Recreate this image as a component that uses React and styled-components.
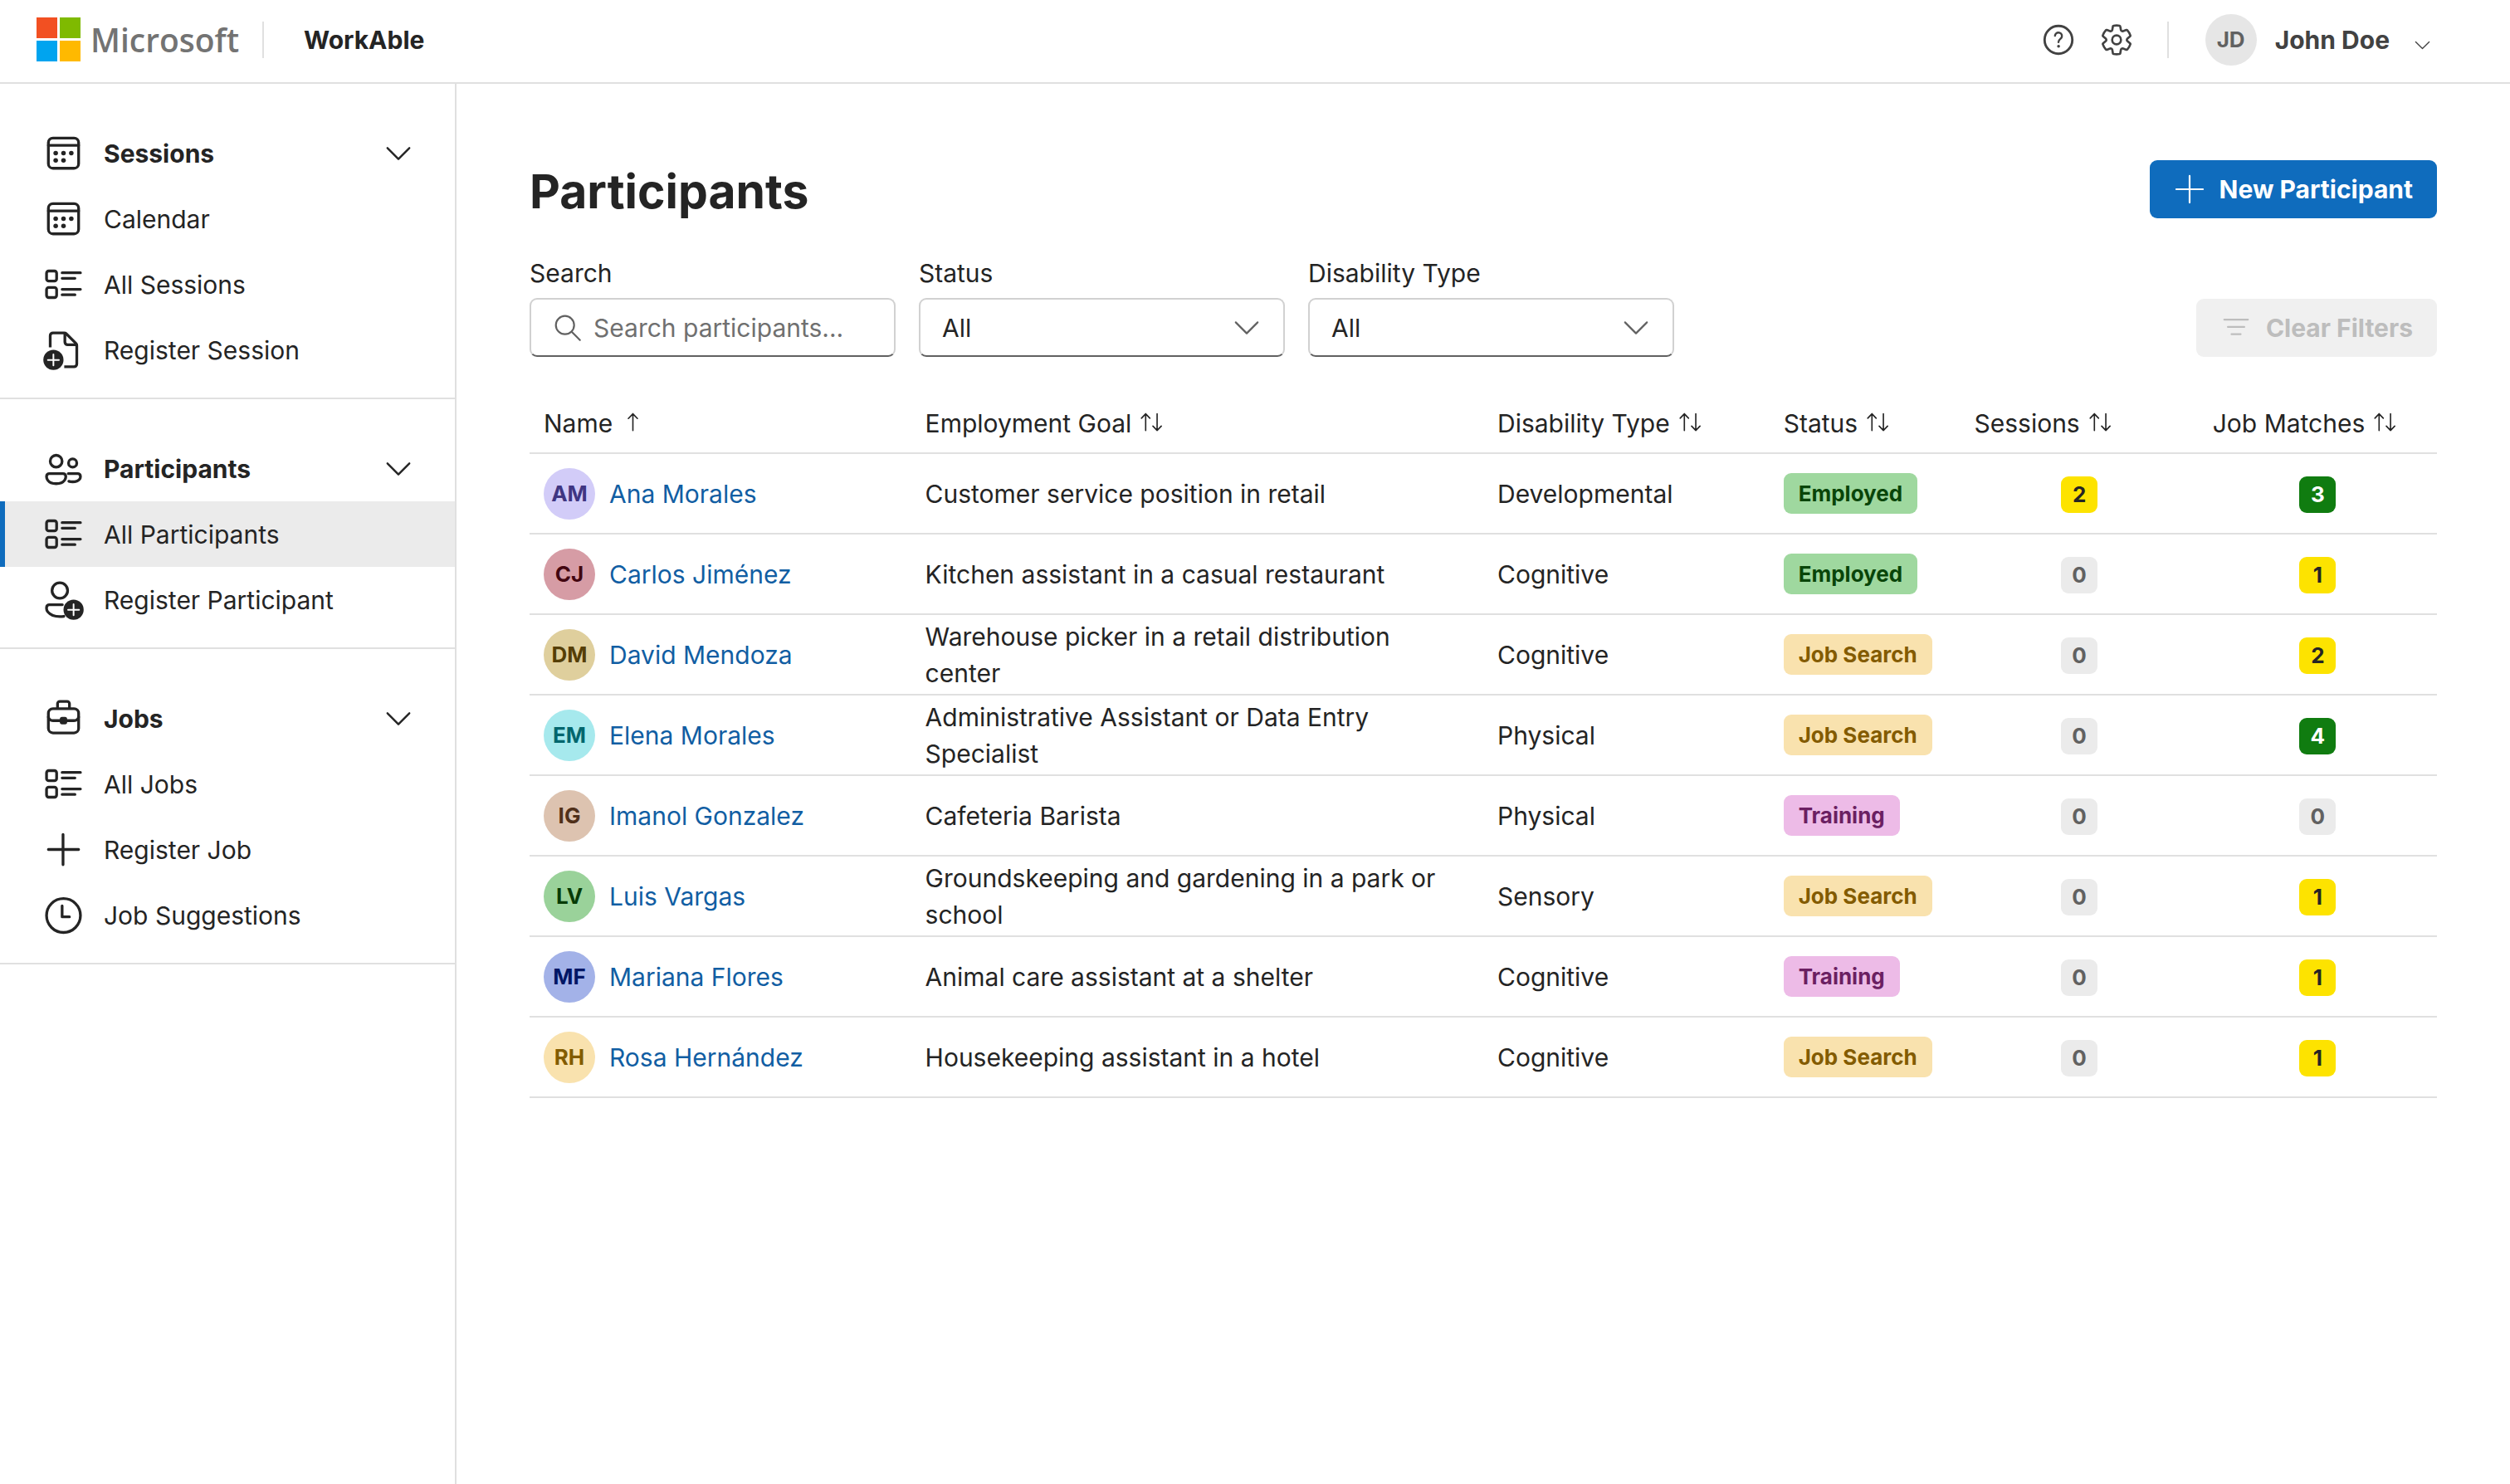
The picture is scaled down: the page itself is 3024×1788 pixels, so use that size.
import React from "react";
import styled, { createGlobalStyle } from "styled-components";

const GlobalStyle = createGlobalStyle`
  *, *::before, *::after { box-sizing: border-box; }
  body {
    margin: 0;
    background: #ffffff;
    color: #242424;
    font-family: Inter, "Liberation Sans", sans-serif;
    font-size: 30px;
    line-height: 44px;
  }
  button, input, select { font: inherit; color: inherit; margin: 0; }
`;

/* ---------- Icons ---------- */

const Svg = styled.svg`
  display: block;
  flex: none;
  width: ${(p) => p.$size}px;
  height: ${(p) => p.$size}px;
  fill: none;
  stroke: currentColor;
  stroke-width: ${(p) => p.$stroke || 1.5};
  stroke-linecap: round;
  stroke-linejoin: round;
`;

const Icon24 = ({ children }) => (
  <Svg $size={53} viewBox="0 0 24 24" aria-hidden="true">{children}</Svg>
);

const PlusDisc = ({ cx }) => (
  <>
    <circle cx={cx} cy="17.5" r="5.5" fill="currentColor" stroke="none" />
    <path d={`M${cx} 14.5v6M${cx - 3} 17.5h6`} stroke="#fff" strokeWidth="0.9" />
  </>
);

const CalendarIcon = () => (
  <Icon24>
    <rect x="3.75" y="3.75" width="16.5" height="16.5" rx="2.5" />
    <path d="M3.75 7.75h16.5" />
    <g fill="currentColor" stroke="none">
      <circle cx="7.75" cy="12" r="1.25" />
      <circle cx="12" cy="12" r="1.25" />
      <circle cx="16.25" cy="12" r="1.25" />
      <circle cx="7.75" cy="16" r="1.25" />
      <circle cx="12" cy="16" r="1.25" />
    </g>
  </Icon24>
);

const ListIcon = () => (
  <Icon24>
    <rect x="2.75" y="4.75" width="5.5" height="5.5" rx="1.2" />
    <rect x="2.75" y="13.75" width="5.5" height="5.5" rx="1.2" />
    <path d="M11.25 5.75h10M11.25 8.75h7M11.25 14.75h10M11.25 17.75h7" />
  </Icon24>
);

const DocumentAddIcon = () => (
  <Icon24>
    <path d="M4.75 10.6V4.25a1.5 1.5 0 0 1 1.5-1.5h6.2c.4 0 .8.2 1 .4l5.4 5.4c.3.3.4.7.4 1.1v10.1a1.5 1.5 0 0 1-1.5 1.5H12.4" strokeLinecap="butt" />
    <path d="M12.75 3v4.75a1.5 1.5 0 0 0 1.5 1.5H19" />
    <PlusDisc cx={6.5} />
  </Icon24>
);

const PeopleIcon = () => (
  <Icon24>
    <circle cx="8" cy="8" r="3.25" />
    <circle cx="17" cy="9" r="2.25" />
    <path d="M4.25 14.75h7.5c.83 0 1.5.67 1.5 1.5v.25s0 3.75-5.25 3.75-5.25-3.75-5.25-3.75v-.25c0-.83.67-1.5 1.5-1.5Z" />
    <path d="M14.6 14.75h5.15c.83 0 1.5.67 1.5 1.5v.25s0 2.75-4.25 2.75c-.8 0-1.5-.1-2.1-.3" />
  </Icon24>
);

const PersonAddIcon = () => (
  <Icon24>
    <circle cx="10" cy="7" r="4.25" />
    <path d="M11.4 14.75H4.25c-.83 0-1.5.67-1.5 1.5v.6c0 .7.25 1.3.7 1.85 1.4 1.7 3.6 2.55 6.55 2.55.8 0 1.5-.06 2.2-.18" />
    <PlusDisc cx={17.5} />
  </Icon24>
);

const BriefcaseIcon = () => (
  <Icon24>
    <path d="M8.75 6.5V4c0-.7.55-1.25 1.25-1.25h4c.7 0 1.25.55 1.25 1.25v2.5" />
    <rect x="3.75" y="6.75" width="16.5" height="13.2" rx="2.5" />
    <path d="M3.75 11.25c.3 1.2 1.3 2 2.5 2h11.5c1.2 0 2.2-.8 2.5-2" />
    <rect x="10" y="11.25" width="4" height="4" rx="1.2" fill="currentColor" stroke="none" />
  </Icon24>
);

const PlusIcon = () => (
  <Icon24>
    <path d="M11.75 3.75v16.5M3.75 12h16.5" />
  </Icon24>
);

const ClockIcon = () => (
  <Icon24>
    <circle cx="12" cy="12.25" r="9.25" />
    <path d="M11.25 7v6h4" />
  </Icon24>
);

const ChevronIcon = ({ size = 44, stroke = 1.1 }) => (
  <Svg $size={size} $stroke={stroke} viewBox="0 0 20 20" aria-hidden="true">
    <path d="M4 7l6 6 6-6" />
  </Svg>
);

const HelpIcon = () => (
  <Svg $size={44} $stroke={1.1} viewBox="0 0 20 20" aria-hidden="true">
    <circle cx="10" cy="10" r="7.6" strokeWidth="1.3" />
    <path d="M8.1 7.8c.1-1 .9-1.8 1.9-1.8s1.9.8 1.9 1.9c0 .8-.5 1.2-.9 1.6-.5.4-1 .9-1 1.8" strokeWidth="1.1" />
    <circle cx="10.05" cy="13.5" r=".8" fill="currentColor" stroke="none" />
  </Svg>
);

const GearIcon = () => (
  <Svg $size={44} $stroke={1.3} viewBox="0 0 20 20" aria-hidden="true">
    <g transform="translate(.7 .7) scale(.93)">
      <path d="M1.91 7.38A8.5 8.5 0 0 1 3.7 4.3a.5.5 0 0 1 .54-.13l1.92.68a1 1 0 0 0 1.32-.76l.36-2a.5.5 0 0 1 .4-.4 8.53 8.53 0 0 1 3.55 0c.2.04.35.2.38.4l.37 2a1 1 0 0 0 1.32.76l1.92-.68a.5.5 0 0 1 .54.13 8.5 8.5 0 0 1 1.78 3.08c.06.2 0 .4-.15.54l-1.56 1.32a1 1 0 0 0 0 1.52l1.56 1.32a.5.5 0 0 1 .15.54 8.5 8.5 0 0 1-1.78 3.08.5.5 0 0 1-.54.13l-1.92-.68a1 1 0 0 0-1.32.76l-.37 2a.5.5 0 0 1-.38.4 8.53 8.53 0 0 1-3.56 0 .5.5 0 0 1-.39-.4l-.36-2a1 1 0 0 0-1.32-.76l-1.92.68a.5.5 0 0 1-.54-.13 8.5 8.5 0 0 1-1.78-3.08.5.5 0 0 1 .15-.54l1.56-1.32a1 1 0 0 0 0-1.52L2.06 7.92a.5.5 0 0 1-.15-.54Z" />
      <circle cx="10" cy="10" r="2.6" />
    </g>
  </Svg>
);

const AddSmallIcon = () => (
  <Svg $size={44} $stroke={1} viewBox="0 0 20 20" aria-hidden="true">
    <path d="M10 2.7v14.6M2.7 10h14.6" />
  </Svg>
);

const FilterIcon = () => (
  <Svg $size={44} $stroke={1} viewBox="0 0 20 20" aria-hidden="true">
    <path d="M3.5 5.5h13M5.5 9.5h9M7.5 13.5h5" />
  </Svg>
);

const SearchIcon = () => (
  <Svg $size={44} $stroke={1} viewBox="0 0 20 20" aria-hidden="true">
    <circle cx="8.5" cy="8.5" r="5" />
    <path d="M12.3 12.3l4.4 4.4" />
  </Svg>
);

const SortUpIcon = () => (
  <Svg $size={35} $stroke={0.75} viewBox="0 0 16 16" aria-hidden="true">
    <path d="M8 3v9.2M5.5 5.6L8 3l2.5 2.6" />
  </Svg>
);

const SortIcon = () => (
  <Svg $size={35} $stroke={0.75} viewBox="0 0 16 16" aria-hidden="true">
    <path d="M4.7 3v9.2M2.4 5.4L4.7 3 7 5.4M11 3v9.2M8.7 9.8l2.3 2.4 2.3-2.4" />
  </Svg>
);

/* ---------- Top bar ---------- */

const TopBar = styled.header`
  display: flex;
  align-items: center;
  height: 101px;
  padding: 0 92px 4px 44px;
  border-bottom: 2px solid #e0e0e0;
`;

const LogoTiles = styled.svg`
  display: block;
  width: 53px;
  height: 53px;
`;

const LogoName = styled.span`
  margin-left: 12px;
  color: #737373;
  font-family: "Open Sans", "Noto Sans", sans-serif;
  font-weight: 600;
  font-size: 39px;
`;

const Divider = styled.span`
  width: 2px;
  height: 44px;
  background: #e0e0e0;
`;

const BrandLink = styled.a`
  display: flex;
  align-items: center;
  width: 272px;
  text-decoration: none;
`;

const AppName = styled.span`
  margin-left: 48px;
  font-weight: 700;
`;

const TopActions = styled.div`
  display: flex;
  align-items: center;
  margin-left: auto;
`;

const IconButton = styled.button`
  display: flex;
  padding: 0;
  margin-right: 26px;
  border: 0;
  background: none;
  color: #424242;
  & + & { margin-right: 39px; }
`;

const UserButton = styled.button`
  display: flex;
  align-items: center;
  gap: 22px;
  margin-left: 44px;
  padding: 0;
  border: 0;
  background: none;
  color: #424242;
  font-weight: 700;
`;

const ChevronSlot = styled.span`
  padding: 14px 0 0 4px;
`;

const Avatar = styled.span`
  display: flex;
  flex: none;
  align-items: center;
  justify-content: center;
  width: 62px;
  height: 62px;
  border-radius: 50%;
  background: ${(p) => p.$bg};
  color: ${(p) => p.$fg};
  font-size: 26px;
  font-weight: 700;
`;

/* ---------- Side navigation ---------- */

const Body = styled.div`
  display: flex;
  align-items: stretch;
  min-height: calc(100vh - 101px);
`;

const SideNav = styled.nav`
  flex: none;
  width: 550px;
  border-right: 2px solid #e0e0e0;
`;

const NavSection = styled.section`
  padding: 44px 0 18px;
  border-bottom: 2px solid #e0e0e0;
`;

const NavHeader = styled.button`
  display: flex;
  align-items: center;
  gap: 22px;
  width: 100%;
  height: 79px;
  padding: 0 46px 0 50px;
  border: 0;
  background: none;
  font-weight: 700;
  text-align: left;
`;

const NavTitle = styled.span`
  flex: 1;
`;

const NavLink = styled.a`
  display: flex;
  align-items: center;
  gap: 22px;
  height: 79px;
  padding-left: 44px;
  border-left: 6px solid ${(p) => (p.$active ? "#0f6cbd" : "transparent")};
  background: ${(p) => (p.$active ? "#ebebeb" : "transparent")};
  color: #242424;
  text-decoration: none;
`;

/* ---------- Main area ---------- */

const Main = styled.main`
  flex: 1;
  min-width: 0;
  padding: 92px 88px;
`;

const TitleRow = styled.div`
  display: flex;
  justify-content: space-between;
  align-items: flex-start;
`;

const Title = styled.h1`
  margin: 0;
  font-size: 57px;
  font-weight: 700;
  line-height: 76px;
`;

const Button = styled.button`
  display: flex;
  align-items: center;
  gap: 14px;
  height: 70px;
  padding: 0 29px 0 26px;
  border: 0;
  border-radius: 9px;
  background: ${(p) => (p.$primary ? "#0f6cbd" : "#f0f0f0")};
  color: ${(p) => (p.$primary ? "#ffffff" : "#bdbdbd")};
  font-weight: 700;
  &:disabled { color: #bdbdbd; }
`;

const Filters = styled.form`
  display: flex;
  align-items: flex-end;
  gap: 28px;
  margin-top: 38px;
`;

const Spacer = styled.span`
  flex: 1;
`;

const Field = styled.div`
  display: flex;
  flex-direction: column;
  gap: 8px;
  width: 441px;
`;

const Box = styled.div`
  display: grid;
  align-items: center;
  height: 71px;
  border: 2px solid #d1d1d1;
  border-bottom-color: #616161;
  border-radius: 9px;
  color: ${(p) => (p.$icon ? "#616161" : "#242424")};
  & > * { grid-area: 1 / 1; }
`;

const LeadIcon = styled.span`
  justify-self: start;
  margin-left: 22px;
`;

const TailIcon = styled.span`
  justify-self: end;
  margin-right: 22px;
  color: #616161;
  pointer-events: none;
`;

const control = `
  width: 100%;
  height: 67px;
  border: 0;
  outline: 0;
  background: none;
`;

const TextInput = styled.input`
  ${control}
  padding: 0 20px 0 75px;
  &::placeholder { color: #707070; opacity: 1; }
`;

const Select = styled.select`
  ${control}
  appearance: none;
  padding: 0 70px 0 26px;
`;

/* ---------- Table ---------- */

const Table = styled.table`
  width: 100%;
  margin-top: 44px;
  border-collapse: collapse;
  table-layout: fixed;
`;

const Col = styled.col`
  width: ${(p) => p.$width};
`;

const HeadCell = styled.th`
  height: 72px;
  padding: 0 17px;
  border-bottom: 2px solid #e0e0e0;
  font-weight: 400;
  text-align: left;
`;

const SortButton = styled.button`
  display: flex;
  align-items: center;
  gap: 7px;
  padding: 0;
  border: 0;
  background: none;
  white-space: nowrap;
`;

const Cell = styled.td`
  height: 97px;
  padding: 0 17px;
  border-bottom: 2px solid #e0e0e0;
  text-align: ${(p) => (p.$center ? "center" : "left")};
`;

const Person = styled.div`
  display: flex;
  align-items: center;
  gap: 17px;
`;

const PersonLink = styled.a`
  color: #115ea3;
  text-decoration: none;
`;

const statusColors = {
  Employed: ["#9fd89f", "#094509"],
  "Job Search": ["#f9e2ae", "#835b00"],
  Training: ["#edbbe7", "#6b1f62"],
};

const StatusBadge = styled.span`
  display: inline-block;
  padding: 0 18px;
  border-radius: 9px;
  background: ${(p) => statusColors[p.$status][0]};
  color: ${(p) => statusColors[p.$status][1]};
  font-size: 26px;
  font-weight: 700;
  line-height: 49px;
  vertical-align: middle;
  white-space: nowrap;
`;

const CountBadge = styled.span`
  display: inline-block;
  width: 44px;
  border-radius: 9px;
  background: ${(p) => (p.$count > 2 ? "#107c10" : p.$count > 0 ? "#fde300" : "#ebebeb")};
  color: ${(p) => (p.$count > 2 ? "#ffffff" : p.$count > 0 ? "#242424" : "#616161")};
  font-size: 26px;
  font-weight: 700;
  line-height: 44px;
  text-align: center;
  vertical-align: middle;
`;

/* ---------- Data ---------- */

const sections = [
  {
    title: "Sessions",
    icon: CalendarIcon,
    links: [
      { label: "Calendar", icon: CalendarIcon },
      { label: "All Sessions", icon: ListIcon },
      { label: "Register Session", icon: DocumentAddIcon },
    ],
  },
  {
    title: "Participants",
    icon: PeopleIcon,
    links: [
      { label: "All Participants", icon: ListIcon, active: true },
      { label: "Register Participant", icon: PersonAddIcon },
    ],
  },
  {
    title: "Jobs",
    icon: BriefcaseIcon,
    links: [
      { label: "All Jobs", icon: ListIcon },
      { label: "Register Job", icon: PlusIcon },
      { label: "Job Suggestions", icon: ClockIcon },
    ],
  },
];

const columns = [
  ["Name", "20%"],
  ["Employment Goal", "30%"],
  ["Disability Type", "15%"],
  ["Status", "10%"],
  ["Sessions", "12.5%"],
  ["Job Matches", "12.5%"],
];

const people = [
  ["AM", "Ana Morales", "#d2ccf8", "#3f3682", "Customer service position in retail", "Developmental", "Employed", 2, 3],
  ["CJ", "Carlos Jiménez", "#d69ca5", "#420610", "Kitchen assistant in a casual restaurant", "Cognitive", "Employed", 0, 1],
  ["DM", "David Mendoza", "#dfcf9d", "#553e06", "Warehouse picker in a retail distribution center", "Cognitive", "Job Search", 0, 2],
  ["EM", "Elena Morales", "#a6e9ed", "#00666d", "Administrative Assistant or Data Entry Specialist", "Physical", "Job Search", 0, 4],
  ["IG", "Imanol Gonzalez", "#ddc3b0", "#50301a", "Cafeteria Barista", "Physical", "Training", 0, 0],
  ["LV", "Luis Vargas", "#9ad29a", "#063b06", "Groundskeeping and gardening in a park or school", "Sensory", "Job Search", 0, 1],
  ["MF", "Mariana Flores", "#a3b2e8", "#001665", "Animal care assistant at a shelter", "Cognitive", "Training", 0, 1],
  ["RH", "Rosa Hernández", "#f9e2ae", "#835b00", "Housekeeping assistant in a hotel", "Cognitive", "Job Search", 0, 1],
];

export default function App() {
  return (
    <>
      <GlobalStyle />
      <TopBar>
        <BrandLink href="#" aria-label="Microsoft">
          <LogoTiles viewBox="0 0 53 53" aria-hidden="true">
            <path fill="#f25022" d="M0 0h25v25H0z" />
            <path fill="#7fba00" d="M28 0h25v25H28z" />
            <path fill="#00a4ef" d="M0 28h25v25H0z" />
            <path fill="#ffb900" d="M28 28h25v25H28z" />
          </LogoTiles>
          <LogoName>Microsoft</LogoName>
        </BrandLink>
        <Divider />
        <AppName>WorkAble</AppName>
        <TopActions>
          <IconButton aria-label="Help"><HelpIcon /></IconButton>
          <IconButton aria-label="Settings"><GearIcon /></IconButton>
          <Divider />
          <UserButton>
            <Avatar $bg="#e6e6e6" $fg="#616161">JD</Avatar>
            John Doe
            <ChevronSlot><ChevronIcon size={27} stroke={1} /></ChevronSlot>
          </UserButton>
        </TopActions>
      </TopBar>

      <Body>
        <SideNav>
          {sections.map(({ title, icon: SectionIcon, links }) => (
            <NavSection key={title}>
              <NavHeader aria-expanded="true">
                <SectionIcon />
                <NavTitle>{title}</NavTitle>
                <ChevronIcon />
              </NavHeader>
              {links.map(({ label, icon: LinkIcon, active }) => (
                <NavLink key={label} href="#" $active={active}>
                  <LinkIcon />
                  {label}
                </NavLink>
              ))}
            </NavSection>
          ))}
        </SideNav>

        <Main>
          <TitleRow>
            <Title>Participants</Title>
            <Button $primary>
              <AddSmallIcon />
              New Participant
            </Button>
          </TitleRow>

          <Filters onSubmit={(e) => e.preventDefault()}>
            <Field>
              <label htmlFor="search">Search</label>
              <Box $icon>
                <TextInput id="search" type="text" placeholder="Search participants..." />
                <LeadIcon><SearchIcon /></LeadIcon>
              </Box>
            </Field>
            <Field>
              <label htmlFor="status">Status</label>
              <Box>
                <Select id="status"><option>All</option></Select>
                <TailIcon><ChevronIcon stroke={1} /></TailIcon>
              </Box>
            </Field>
            <Field>
              <label htmlFor="disability">Disability Type</label>
              <Box>
                <Select id="disability"><option>All</option></Select>
                <TailIcon><ChevronIcon stroke={1} /></TailIcon>
              </Box>
            </Field>
            <Spacer />
            <Button type="button" disabled>
              <FilterIcon />
              Clear Filters
            </Button>
          </Filters>

          <Table>
            <colgroup>
              {columns.map(([name, width]) => <Col key={name} $width={width} />)}
            </colgroup>
            <thead>
              <tr>
                {columns.map(([name], i) => (
                  <HeadCell key={name} scope="col">
                    <SortButton>
                      {name}
                      {i === 0 ? <SortUpIcon /> : <SortIcon />}
                    </SortButton>
                  </HeadCell>
                ))}
              </tr>
            </thead>
            <tbody>
              {people.map(([initials, name, bg, fg, goal, type, status, sessionCount, matches]) => (
                <tr key={name}>
                  <Cell>
                    <Person>
                      <Avatar $bg={bg} $fg={fg}>{initials}</Avatar>
                      <PersonLink href="#">{name}</PersonLink>
                    </Person>
                  </Cell>
                  <Cell>{goal}</Cell>
                  <Cell>{type}</Cell>
                  <Cell><StatusBadge $status={status}>{status}</StatusBadge></Cell>
                  <Cell $center><CountBadge $count={sessionCount}>{sessionCount}</CountBadge></Cell>
                  <Cell $center><CountBadge $count={matches}>{matches}</CountBadge></Cell>
                </tr>
              ))}
            </tbody>
          </Table>
        </Main>
      </Body>
    </>
  );
}
